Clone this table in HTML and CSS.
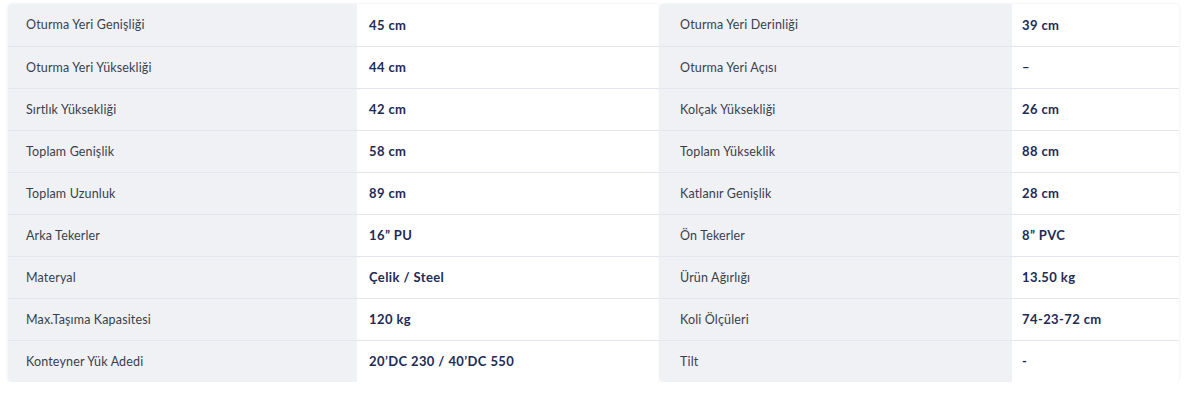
FILE: index.html
```html
<!DOCTYPE html>
<html lang="tr">
<head>
<meta charset="utf-8">
<link rel="stylesheet" href="styles.css">
</head>
<body>
<div class="specs">
  <table class="spec spec-left">
    <tbody>
      <tr><th>Oturma Yeri Genişliği</th><td>45 cm</td></tr>
      <tr><th>Oturma Yeri Yüksekliği</th><td>44 cm</td></tr>
      <tr><th>Sırtlık Yüksekliği</th><td>42 cm</td></tr>
      <tr><th>Toplam Genişlik</th><td>58 cm</td></tr>
      <tr><th>Toplam Uzunluk</th><td>89 cm</td></tr>
      <tr><th>Arka Tekerler</th><td>16” PU</td></tr>
      <tr><th>Materyal</th><td>Çelik / Steel</td></tr>
      <tr><th>Max.Taşıma Kapasitesi</th><td>120 kg</td></tr>
      <tr><th>Konteyner Yük Adedi</th><td>20’DC 230 / 40’DC 550</td></tr>
    </tbody>
  </table>
  <table class="spec spec-right">
    <tbody>
      <tr><th>Oturma Yeri Derinliği</th><td>39 cm</td></tr>
      <tr><th>Oturma Yeri Açısı</th><td>–</td></tr>
      <tr><th>Kolçak Yüksekliği</th><td>26 cm</td></tr>
      <tr><th>Toplam Yükseklik</th><td>88 cm</td></tr>
      <tr><th>Katlanır Genişlik</th><td>28 cm</td></tr>
      <tr><th>Ön Tekerler</th><td>8” PVC</td></tr>
      <tr><th>Ürün Ağırlığı</th><td>13.50 kg</td></tr>
      <tr><th>Koli Ölçüleri</th><td>74-23-72 cm</td></tr>
      <tr><th>Tilt</th><td>-</td></tr>
    </tbody>
  </table>
</div>
</body>
</html>
```
FILE: styles.css
```css
html, body {
  margin: 0;
  padding: 0;
  background: #ffffff;
  font-family: "Lato", "Noto Sans", sans-serif;
}

.specs {
  display: flex;
  align-items: flex-start;
  gap: 1px;
  padding: 4px 0 0 8px;
}

.spec {
  border-collapse: collapse;
  table-layout: fixed;
  background: #ffffff;
  border-radius: 4px;
  box-shadow: 0 0 3px rgba(30, 40, 80, 0.10);
  overflow: hidden;
}

.spec-left { width: 651px; }
.spec-right { width: 519px; }

.spec-left th { width: 349px; padding-left: 18px; }
.spec-left td { padding-left: 12px; }
.spec-right th { width: 352px; padding-left: 20px; }
.spec-right td { padding-left: 10px; }

.spec tr {
  height: 42px;
}

.spec tr + tr th,
.spec tr + tr td {
  border-top: 1px solid #e3e6ec;
}

.spec th {
  background: #eff1f5;
  text-align: left;
  font-weight: 400;
  font-size: 12.5px;
  letter-spacing: 0.15px;
  color: #3a3f4c;
  box-sizing: border-box;
  padding-top: 0;
  padding-bottom: 0;
}

.spec td {
  font-weight: 700;
  font-size: 13px;
  letter-spacing: 0.4px;
  color: #1e2a57;
  padding-top: 0;
  padding-bottom: 0;
}
```
